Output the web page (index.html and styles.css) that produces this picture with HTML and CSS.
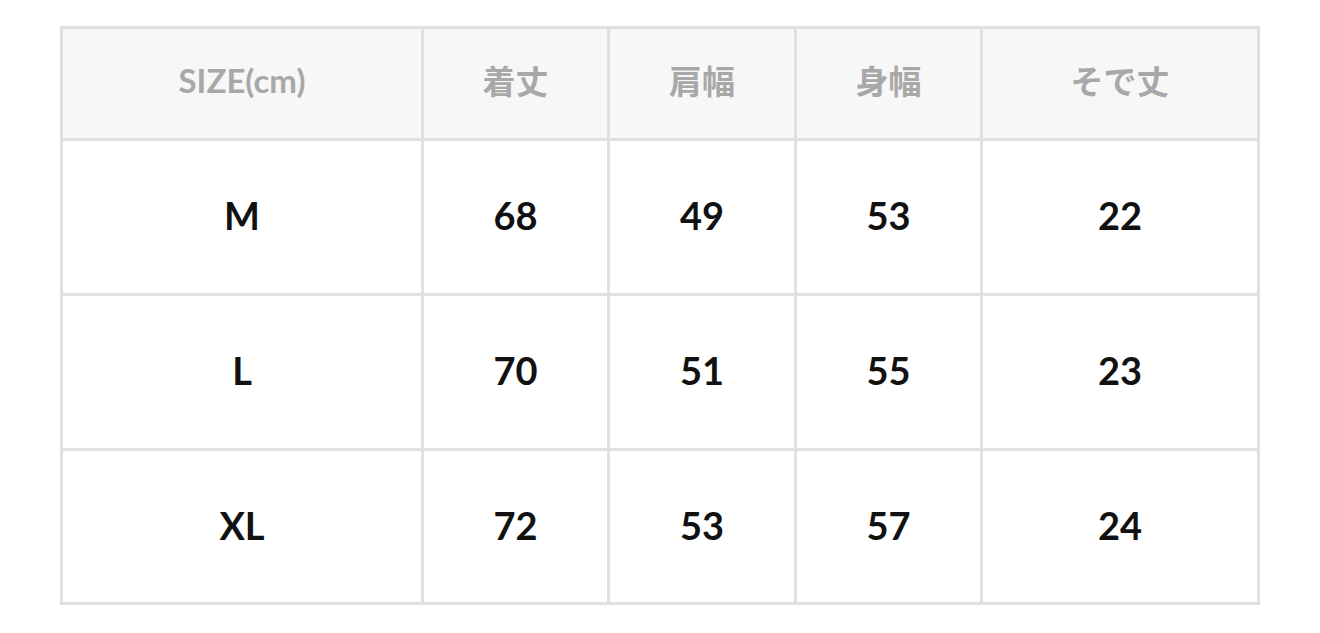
FILE: index.html
```html
<!DOCTYPE html>
<html lang="ja">
<head>
<meta charset="utf-8">
<title>Size chart</title>
<link rel="stylesheet" href="styles.css">
</head>
<body>
<div class="page">
  <div class="size-table" role="table">
    <div class="cell head">SIZE(cm)</div>
    <div class="cell head">着丈</div>
    <div class="cell head">肩幅</div>
    <div class="cell head">身幅</div>
    <div class="cell head">そで丈</div>

    <div class="cell">M</div>
    <div class="cell">68</div>
    <div class="cell">49</div>
    <div class="cell">53</div>
    <div class="cell">22</div>

    <div class="cell">L</div>
    <div class="cell">70</div>
    <div class="cell">51</div>
    <div class="cell">55</div>
    <div class="cell">23</div>

    <div class="cell">XL</div>
    <div class="cell">72</div>
    <div class="cell">53</div>
    <div class="cell">57</div>
    <div class="cell">24</div>
  </div>
</div>
</body>
</html>
```
FILE: styles.css
```css
html, body {
  margin: 0;
  padding: 0;
  background: #ffffff;
}

.page {
  padding: 26px 0 0 60px;
}

.size-table {
  display: grid;
  grid-template-columns: 358px 183px 184px 183px 274px;
  grid-template-rows: 109px 152px 152px 151px;
  gap: 3px;
  padding: 3px;
  width: 1200px;
  box-sizing: border-box;
  background: #e0e0e0;
  font-family: Lato, "Noto Sans CJK JP", sans-serif;
  font-weight: 700;
}

.cell {
  display: flex;
  align-items: center;
  justify-content: center;
  padding-bottom: 4px;
  background: #ffffff;
  color: #111111;
  font-size: 38px;
}

.cell.head {
  padding-bottom: 8px;
  background: #f7f7f7;
  color: #a8a8a8;
  font-size: 33px;
}
```
